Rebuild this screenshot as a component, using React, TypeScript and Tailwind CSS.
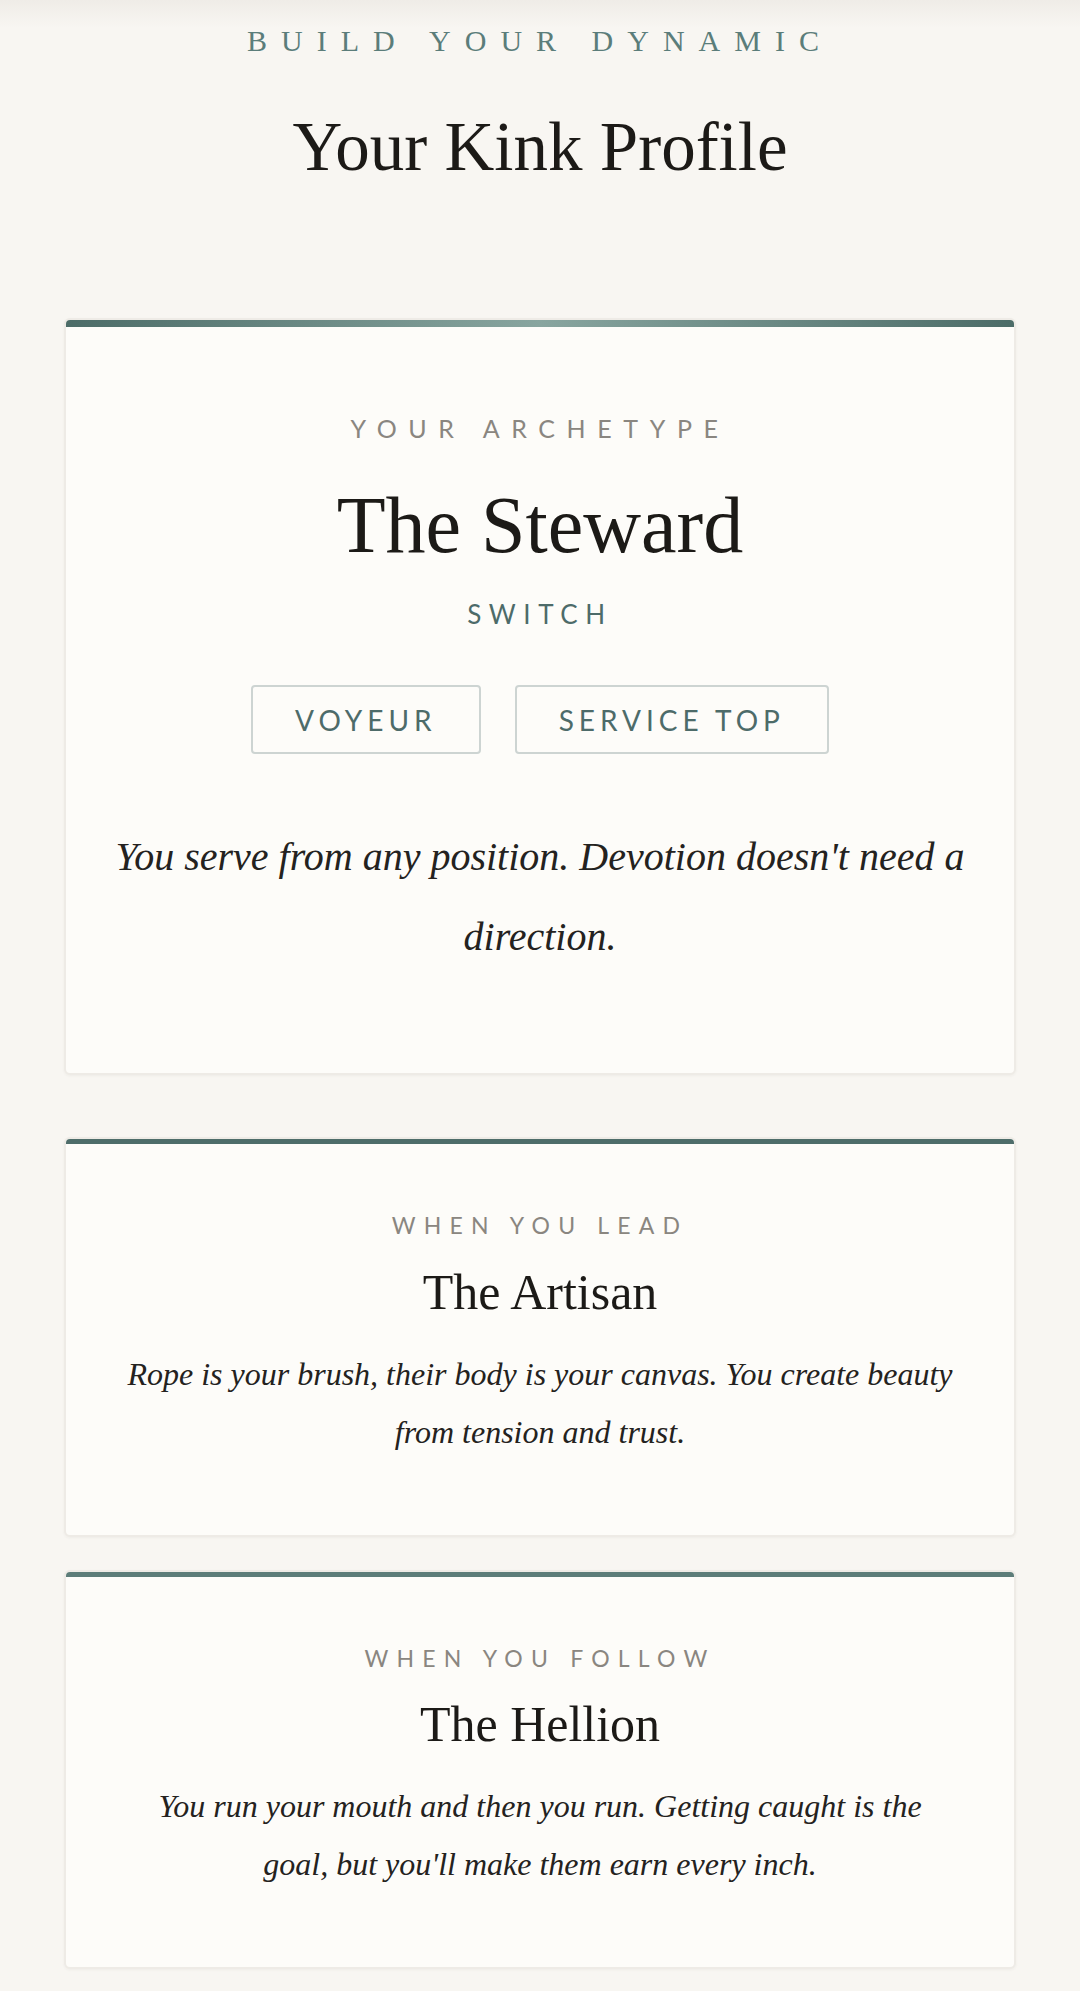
const serif = { fontFamily: '"Liberation Serif", "Times New Roman", serif' }
const sans = { fontFamily: 'Lato, "Open Sans", "Liberation Sans", sans-serif' }

type SideCard = {
  label: string
  title: string
  body: string
  bar: string
  bodyWidth: string
}

const SIDES: SideCard[] = [
  {
    label: 'When you lead',
    title: 'The Artisan',
    body: 'Rope is your brush, their body is your canvas. You create beauty from tension and trust.',
    bar: 'bg-[#4e6d6a]',
    bodyWidth: 'max-w-[860px]',
  },
  {
    label: 'When you follow',
    title: 'The Hellion',
    body: "You run your mouth and then you run. Getting caught is the goal, but you'll make them earn every inch.",
    bar: 'bg-[#5d7d79]',
    bodyWidth: 'max-w-[800px]',
  },
]

const TAGS = ['Voyeur', 'Service Top']

function Tag({ label }: { label: string }) {
  return (
    <div
      className="h-[69px] px-[42px] flex items-center justify-center border-2 border-[#cdd4d2] rounded-[4px] text-[28px] uppercase tracking-[5px] text-[#4d6b69]"
      style={sans}
    >
      {label}
    </div>
  )
}

function SideProfile({ card, last }: { card: SideCard; last: boolean }) {
  return (
    <div
      className={`bg-[#fdfcf9] border-2 border-[#eeebe6] rounded-[6px] overflow-hidden shadow-[0_1px_3px_rgba(60,50,40,0.05)] ${
        last ? '' : 'mb-[33px]'
      }`}
    >
      <div className={`h-[5px] ${card.bar}`} />
      <div className="px-[44px] pt-[64px] pb-[74px] flex flex-col items-center text-center">
        <div className="text-[23px] leading-[1.5] uppercase tracking-[8.2px] text-[#8a8680]" style={sans}>
          {card.label}
        </div>
        <div className="mt-[19px] text-[50px] leading-[1.2] text-[#1c1a17]" style={serif}>
          {card.title}
        </div>
        <p className={`mt-[23px] ${card.bodyWidth} text-[32px] leading-[58px] italic text-[#242220]`} style={serif}>
          {card.body}
        </p>
      </div>
    </div>
  )
}

export default function App() {
  return (
    <div className="min-h-[1991px] bg-[#f8f6f2]">
      <div className="bg-[linear-gradient(180deg,#efece7_0px,#f8f6f2_28px)] pt-[18px] flex flex-col items-center">
        <div className="text-[30px] leading-[1.5] uppercase tracking-[14px] text-[#5b7d7a]" style={serif}>
          Build your dynamic
        </div>
        <h1 className="mt-[43px] text-[69px] leading-[1.2] text-[#1c1a17]" style={serif}>
          Your Kink Profile
        </h1>
      </div>

      <div className="px-[64px] pt-[129px]">
        {/* Main archetype */}
        <div className="bg-[#fdfcf9] border-2 border-[#eeebe6] rounded-[6px] overflow-hidden shadow-[0_1px_3px_rgba(60,50,40,0.05)] mb-[62px]">
          <div className="h-[7px] bg-[linear-gradient(90deg,#4c6c68,#88a59f_50%,#4c6c68)]" />
          <div className="px-[40px] pt-[83px] pb-[96px] flex flex-col items-center text-center">
            <div className="text-[25px] leading-[1.5] uppercase tracking-[11.6px] text-[#8a8680]" style={sans}>
              Your archetype
            </div>
            <h2 className="mt-[30px] text-[80px] leading-[1.2] text-[#1c1a17]" style={serif}>
              The Steward
            </h2>
            <div className="mt-[22px] text-[26px] leading-[1.5] uppercase tracking-[7.6px] text-[#4d6b69]" style={sans}>
              Switch
            </div>
            <div className="mt-[51px] flex gap-[34px]">
              {TAGS.map(t => (
                <Tag key={t} label={t} />
              ))}
            </div>
            <p className="mt-[63px] text-[40px] leading-[80px] italic text-[#242220]" style={serif}>
              You serve from any position. Devotion doesn't need a direction.
            </p>
          </div>
        </div>

        {SIDES.map((c, i) => (
          <SideProfile key={c.title} card={c} last={i === SIDES.length - 1} />
        ))}
      </div>
    </div>
  )
}
